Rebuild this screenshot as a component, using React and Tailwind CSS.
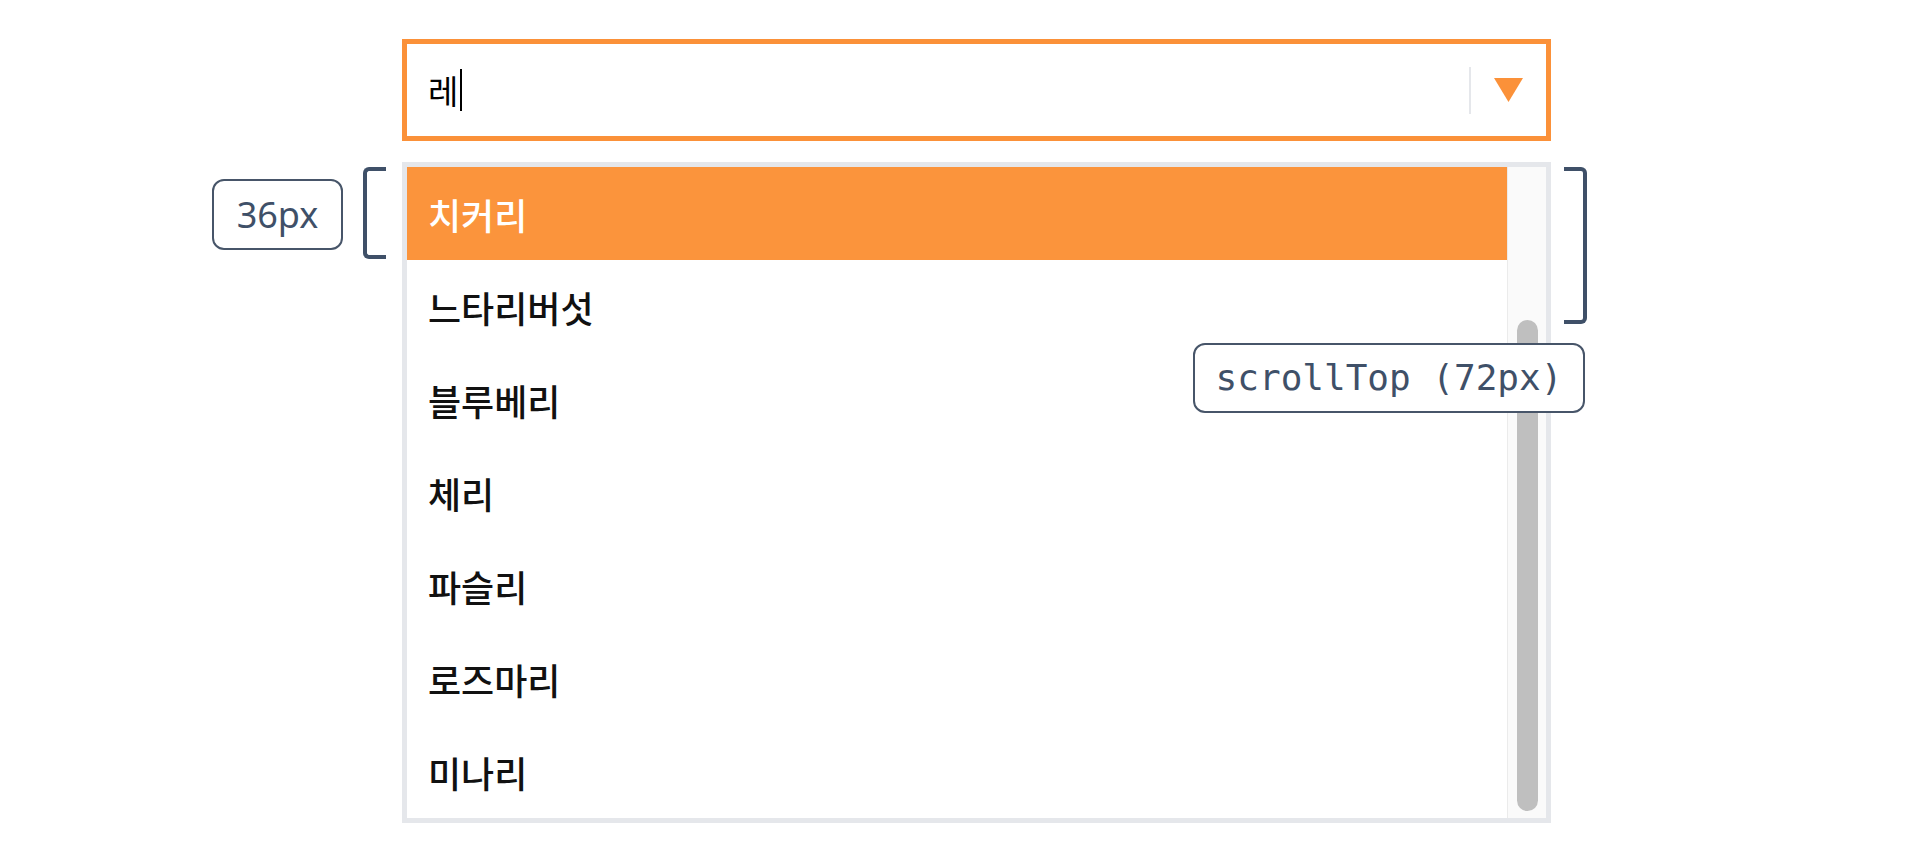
import React from "react";

const OPTIONS = ["치커리", "느타리버섯", "블루베리", "체리", "파슬리", "로즈마리", "미나리"];

const KR = { fontFamily: '"Noto Sans CJK KR", "Noto Sans", sans-serif' };

export default function App() {
  return (
    <div className="relative w-full h-[865px] bg-white overflow-hidden" style={KR}>
      {/* Combobox column */}
      <div className="ml-[402px] pt-[39px] w-[1149px] flex flex-col">
        {/* Input */}
        <div className="h-[102px] border-[5px] border-[#fb9139] flex items-center pl-[21px] pr-[23px]">
          <div className="flex-1 flex items-center">
            <span className="text-[33px] text-black leading-none">레</span>
            <span className="ml-[2px] w-[2px] h-[42px] bg-black" />
          </div>
          <div className="w-[2px] h-[47px] bg-[#e5e7eb] mr-[23px]" />
          <svg width="29" height="24" viewBox="0 0 29 24">
            <polygon points="0,0 29,0 14.5,24" fill="#fb9139" />
          </svg>
        </div>

        {/* Listbox */}
        <div className="mt-[21px] h-[661px] border-[5px] border-[#e5e7eb] flex">
          <ul className="flex-1 flex flex-col">
            {OPTIONS.map((o, i) => (
              <li
                key={o}
                className={`h-[93px] shrink-0 flex items-center pl-[21px] text-[36px] font-medium ${
                  i === 0 ? "bg-[#fb943c] text-white" : "text-[#111111]"
                }`}
              >
                {o}
              </li>
            ))}
          </ul>
          <div className="w-[39px] bg-[#fafafa] border-l border-[#ebebeb] pt-[153px] pb-[7px] pl-[9px]">
            <div className="w-[21px] h-full rounded-full bg-[#bfbfbf]" />
          </div>
        </div>
      </div>

      {/* Annotation: option height */}
      <div className="absolute left-[212px] top-[179px] w-[131px] h-[71px] border-2 border-[#475569] rounded-[12px] bg-white flex items-center justify-center text-[36px] text-[#3f5068]" style={{ fontFamily: '"Noto Sans", Inter, sans-serif' }}>
        36px
      </div>
      <div className="absolute left-[363px] top-[167px] w-[23px] h-[92px] border-l-4 border-t-4 border-b-4 border-[#3f5068] rounded-l-[6px]" />

      {/* Annotation: scrollTop */}
      <div className="absolute left-[1564px] top-[167px] w-[23px] h-[157px] border-r-4 border-t-4 border-b-4 border-[#3f5068] rounded-r-[6px]" />
      <div className="absolute left-[1193px] top-[343px] w-[392px] h-[70px] border-2 border-[#475569] rounded-[12px] bg-white flex items-center justify-center text-[36px] text-[#3f5068]" style={{ fontFamily: '"DejaVu Sans Mono", "Liberation Mono", monospace' }}>
        scrollTop (72px)
      </div>
    </div>
  );
}
